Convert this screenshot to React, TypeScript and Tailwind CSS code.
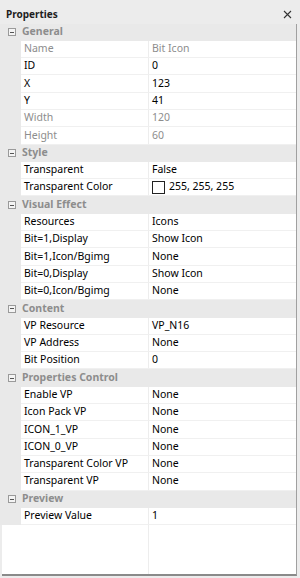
import React from "react";

type Row =
  | { kind: "h"; label: string }
  | { kind: "r"; name: string; value: string; dim?: boolean; swatch?: boolean };

const rows: Row[] = [
  { kind: "h", label: "General" },
  { kind: "r", name: "Name", value: "Bit Icon", dim: true },
  { kind: "r", name: "ID", value: "0" },
  { kind: "r", name: "X", value: "123" },
  { kind: "r", name: "Y", value: "41" },
  { kind: "r", name: "Width", value: "120", dim: true },
  { kind: "r", name: "Height", value: "60", dim: true },
  { kind: "h", label: "Style" },
  { kind: "r", name: "Transparent", value: "False" },
  { kind: "r", name: "Transparent Color", value: "255, 255, 255", swatch: true },
  { kind: "h", label: "Visual Effect" },
  { kind: "r", name: "Resources", value: "Icons" },
  { kind: "r", name: "Bit=1,Display", value: "Show Icon" },
  { kind: "r", name: "Bit=1,Icon/Bgimg", value: "None" },
  { kind: "r", name: "Bit=0,Display", value: "Show Icon" },
  { kind: "r", name: "Bit=0,Icon/Bgimg", value: "None" },
  { kind: "h", label: "Content" },
  { kind: "r", name: "VP Resource", value: "VP_N16" },
  { kind: "r", name: "VP Address", value: "None" },
  { kind: "r", name: "Bit Position", value: "0" },
  { kind: "h", label: "Properties Control" },
  { kind: "r", name: "Enable VP", value: "None" },
  { kind: "r", name: "Icon Pack VP", value: "None" },
  { kind: "r", name: "ICON_1_VP", value: "None" },
  { kind: "r", name: "ICON_0_VP", value: "None" },
  { kind: "r", name: "Transparent Color VP", value: "None" },
  { kind: "r", name: "Transparent VP", value: "None" },
  { kind: "h", label: "Preview" },
  { kind: "r", name: "Preview Value", value: "1" },
];

function Minus() {
  return (
    <div className="w-[8px] h-[8px] border border-[#9a9a9a] bg-[#f4f4f4] flex items-center justify-center">
      <div className="w-[4px] h-px bg-[#555]" />
    </div>
  );
}

export default function App() {
  return (
    <div
      className="w-[300px] h-[578px] bg-[#ececec] flex flex-col text-[10.5px] text-black overflow-hidden"
      style={{ fontFamily: '"Segoe UI", "Noto Sans", sans-serif' }}
    >
      <div className="h-[23.5px] flex items-center justify-between pt-[5px] pl-[6px] pr-[7px] shrink-0">
        <span className="font-bold text-[10px] text-[#1e1e1e]">Properties</span>
        <svg width="9" height="9" viewBox="0 0 9 9" className="mr-[1px]">
          <path d="M1 1 L8 8 M8 1 L1 8" stroke="#333" strokeWidth="1.1" />
        </svg>
      </div>
      <div className="flex-1 flex flex-col bg-white ml-[2px] mr-[3px] border-r border-[#a0a0a0] border-b-2 border-b-[#8a8a8a]">
        {rows.map((r, i) =>
          r.kind === "h" ? (
            <div key={i} className="h-[17.3px] flex items-center bg-[#e9e9e9] shrink-0 -ml-[2px]">
              <div className="w-[22px] flex justify-center pl-[2px]">
                <Minus />
              </div>
              <span className="font-bold text-[#8d8d8d]">{r.label}</span>
            </div>
          ) : (
            <div key={i} className="h-[17.3px] flex shrink-0 -ml-[2px]">
              <div className="w-[21px] bg-[#e9e9e9]" />
              <div className="w-[128px] flex items-center pl-[3px] border-b border-[#f0f0f0] border-r border-r-[#ededed] whitespace-nowrap">
                <span className={r.dim ? "text-[#8d8d8d]" : ""}>{r.name}</span>
              </div>
              <div className="flex-1 flex items-center pl-[3px] border-b border-[#f0f0f0] whitespace-nowrap">
                {r.swatch && <div className="w-[13px] h-[13px] border border-[#222] bg-white mr-[4px]" />}
                <span className={r.dim ? "text-[#8d8d8d]" : ""}>{r.value}</span>
              </div>
            </div>
          )
        )}
        <div className="flex-1 flex -ml-[2px]">
          <div className="w-[149px] border-r border-[#ededed]" />
          <div className="flex-1" />
        </div>
      </div>
      <div className="h-[2px] shrink-0" />
    </div>
  );
}
